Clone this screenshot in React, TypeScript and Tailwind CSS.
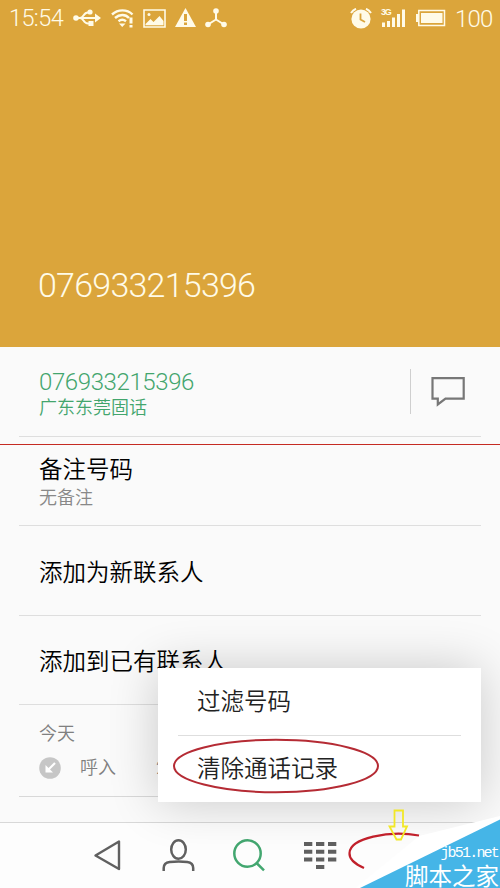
import type { ReactNode } from "react";

const PHONE = "076933215396";

export default function App() {
  return (
    <div className="relative flex h-[888px] w-[500px] flex-col overflow-hidden bg-[#fafafa] font-['Roboto','Noto_Sans_CJK_SC',sans-serif] font-[350]">
      <header className="flex h-[347px] shrink-0 flex-col justify-between bg-[#dba53b] text-[#fffbe8]">
        <StatusBar />
        <h1 className="mb-[42px] ml-[38px] text-[34px] leading-10 font-light tracking-[-0.76px]">{PHONE}</h1>
      </header>

      <main className="flex h-[475px] shrink-0 flex-col px-[19px]">
        <section className="flex h-[90px] items-center border-b border-[#dedede] pl-5">
          <div className="flex-1 text-[#43a56d]">
            <div className="mt-[7px] text-[24px] leading-[26px] font-light tracking-[-0.4px]">{PHONE}</div>
            <div className="text-[18px] leading-[26px]">广东东莞固话</div>
          </div>
          <div className="flex h-[45px] w-[71px] items-center border-l border-[#cfcfcf] pl-[20px]">
            <BubbleIcon />
          </div>
        </section>

        <section className="flex h-[89px] flex-col justify-center border-b border-[#dedede] pt-[3px] pl-5">
          <div className="text-[23.5px] leading-[30px] text-black">备注号码</div>
          <div className="text-[18px] leading-[25px] text-[#888]">无备注</div>
        </section>

        <Row>添加为新联系人</Row>
        <Row>添加到已有联系人</Row>

        <section className="flex h-[92px] flex-col border-b border-[#d8d8d8] pt-[15px] pl-5 text-[18px] text-[#808080]">
          <div className="leading-7">今天</div>
          <div className="mt-[6px] flex items-center leading-7">
            <IncomingIcon />
            <span className="ml-[19px]">呼入</span>
            <span className="ml-[40px]">22:15</span>
          </div>
        </section>
      </main>

      <NavBar />

      <Menu />

      <Marks />

      <div className="absolute right-0 bottom-0 flex flex-col items-end text-white">
        <div className="pr-[2px] font-['Liberation_Mono',monospace] text-[15px] leading-4 font-normal tracking-[-1.8px]">jb51.net</div>
        <div className="pr-[1px] font-['Noto_Sans_CJK_SC',sans-serif] text-[23.5px] leading-[26px] font-normal">脚本之家</div>
      </div>
    </div>
  );
}

function Row({ children }: { children: ReactNode }) {
  return (
    <section className="flex h-[89.5px] items-center border-b border-[#dedede] pt-[6px] pl-5 text-[23.5px] text-black">
      {children}
    </section>
  );
}

function StatusBar() {
  return (
    <div className="flex h-9 items-center pr-[9px] pl-[9px] text-[24px] font-light tracking-[-0.6px]">
      <span className="mt-[2px] text-[23.5px]">15:54</span>
      <svg className="ml-[10px]" width="28" height="20" viewBox="0 0 28 20" fill="none" stroke="currentColor" strokeWidth="2">
        <path d="M2 10h22M7 10c4 0 3-5.500 8-5.500h2M7 10c4 0 3 5.500 8 5.500h2" />
        <path d="M22 5.500l6 4.500-6 4.500z" fill="currentColor" stroke="none" />
        <circle cx="3" cy="10" r="2.8" fill="currentColor" stroke="none" />
        <circle cx="17" cy="4" r="2.6" fill="currentColor" stroke="none" />
        <path d="M15.500 13h5v5h-5z" fill="currentColor" stroke="none" />
      </svg>
      <svg className="ml-[10px]" width="23" height="20" viewBox="0 0 23 20" fill="none" stroke="currentColor" strokeWidth="2.4">
        <path d="M1 6.5c6-5.5 15-5.5 20.5 0M4 10c4.5-4 10.500-4 14 0M7.500 13.300c2.500-2 5-2 7.500 0" />
        <path d="M8 15.500h6.500L11.200 19zM18.500 9.500h3v6h-3zM18.500 17h3v2.500h-3z" fill="currentColor" stroke="none" />
      </svg>
      <svg className="ml-[9px]" width="23" height="19" viewBox="0 0 23 19" fill="none" stroke="currentColor" strokeWidth="1.6">
        <path d="M1 1h21v17H1z" />
        <path d="M2.500 15l5-5 3 3 6-6 4 5v4.200h-18z" fill="currentColor" stroke="none" />
        <circle cx="6" cy="5.500" r="1.500" fill="currentColor" stroke="none" />
      </svg>
      <svg className="ml-[9px]" width="21" height="20" viewBox="0 0 21 20">
        <path d="M10.500 0L21 19H0z" fill="currentColor" />
        <path d="M9 6h3v7H9zM9 14.500h3v2.500H9z" fill="#dba53b" />
      </svg>
      <svg className="ml-[9px]" width="22" height="20" viewBox="0 0 22 20" fill="currentColor">
        <path d="M11 3v8.500M11 11.500L3 16.500M11 11.500l8 5" stroke="currentColor" strokeWidth="2" />
        <circle cx="11" cy="3" r="2.800" />
        <circle cx="3" cy="16.500" r="2.800" />
        <circle cx="19" cy="16.500" r="2.800" />
      </svg>
      <div className="flex-1" />
      <svg width="22" height="21" viewBox="0 0 22 21" fill="none">
        <circle cx="11" cy="11" r="9.600" fill="currentColor" />
        <path d="M1 5Q3 2 6 .8M21 5Q19 2 16 .8" stroke="currentColor" strokeWidth="2" />
        <path d="M10.500 5.500v6l4.500 2.500" stroke="#dba53b" strokeWidth="1.800" />
      </svg>
      <div className="relative ml-[9px] h-[20px] w-[25px]">
        <span className="absolute -top-[2px] left-0 font-['Liberation_Sans',sans-serif] text-[9px] leading-[12px] font-bold tracking-[-1.200px]">3G</span>
        <svg width="25" height="20" viewBox="0 0 25 20" fill="currentColor">
          <path d="M1 14.500h3V19H1zM6 13h3v6H6zM11 9.500h3V19h-3zM16 6h3v13h-3zM21 1.500h3V19h-3z" />
        </svg>
      </div>
      <svg className="ml-[10px]" width="30" height="18" viewBox="0 0 30 18" fill="currentColor">
        <path d="M0 5h2.500v8H0zM5 4h21.500v10H5z" />
        <path d="M2.800 1.500h25.700v15H2.800z" fill="none" stroke="currentColor" strokeWidth="1.500" />
      </svg>
      <span className="mt-[1px] ml-[9px] w-[36px] tracking-[-0.8px]">100</span>
    </div>
  );
}

function BubbleIcon() {
  return (
    <svg width="34" height="32" viewBox="0 0 34 32" fill="none" stroke="#777" strokeWidth="2.200">
      <path d="M1.500 2.100h31.200v20.600H14.500l-7.700 5.800v-5.800H1.500z" />
    </svg>
  );
}

function IncomingIcon() {
  return (
    <svg width="22" height="22" viewBox="0 0 22 22">
      <circle cx="11" cy="11" r="10.800" fill="#c6c6c6" />
      <path d="M16 6l-7 7" stroke="#fff" strokeWidth="2.200" />
      <path d="M6.500 8v7.500H14z" fill="#fff" />
    </svg>
  );
}

function NavBar() {
  return (
    <nav className="flex h-[66px] shrink-0 items-center border-t border-[#d8d8d8] bg-[#fdfdfd] pl-[93px] text-[#606060]">
      <svg className="-mt-[2px]" width="29" height="34" viewBox="0 0 29 34" fill="none" stroke="currentColor" strokeWidth="2.400" strokeLinejoin="round">
        <path d="M26 3.500v27.500L2.500 17.500z" />
      </svg>
      <svg className="-mt-[2px] ml-[40px]" width="34" height="34" viewBox="0 0 34 34" fill="none" stroke="currentColor" strokeWidth="2.500">
        <ellipse cx="16.500" cy="11.500" rx="7.300" ry="9.300" />
        <path d="M1.700 33v-3c0-3 2-5.500 6-6 6-.8 12-.8 17.500 0 4 .5 6 3 6 6v3" />
      </svg>
      <svg className="-mt-[2px] ml-[36px] text-[#43a770]" width="34" height="34" viewBox="0 0 34 34" fill="none" stroke="currentColor" strokeWidth="2.500">
        <circle cx="15.500" cy="15.500" r="13.200" />
        <path d="M24.500 25l7.500 7.300" />
      </svg>
      <svg className="-mt-[2px] ml-[38px]" width="33" height="30" viewBox="0 0 33 30" fill="currentColor">
        <path d="M0 2h8.300v4H0zM12 2h8.300v4H12zM24 2h8.300v4H24zM0 9.700h8.300v4H0zM12 9.700h8.300v4H12zM24 9.700h8.300v4H24zM0 17.400h8.300v4H0zM12 17.400h8.300v4H12zM24 17.400h8.300v4H24zM12 25h8.300v4H12z" />
      </svg>
    </nav>
  );
}

function Menu() {
  return (
    <div className="absolute top-[668px] left-[158px] flex h-[134px] w-[323px] flex-col bg-white px-5 text-[23.5px] text-[#222] shadow-[0_0_50px_rgba(0,0,0,0.2)]">
      <div className="flex h-[68px] items-center border-b border-[#dedede] pt-[2px] pl-[19px]">过滤号码</div>
      <div className="flex h-[66px] items-center pt-[2px] pl-[19px]">清除通话记录</div>
    </div>
  );
}

// hand-drawn annotations and the corner badge, laid over the screen
function Marks() {
  return (
    <svg className="absolute inset-0" width="500" height="888" viewBox="0 0 500 888" fill="none">
      <path d="M0 444.500h500" stroke="#c52b22" strokeWidth="1.200" />
      <ellipse cx="276" cy="766" rx="102" ry="26.200" stroke="#b52b34" strokeWidth="2" />
      <path d="M500 816L419 836L355 888H500z" fill="#fff" />
      <path d="M419 835.500C389 830 350 838 349.500 853C349 859 355 864 364 868" stroke="#c1202b" strokeWidth="2.200" />
      <path d="M500 819.500V888H360z" fill="#45b5e7" />
      <path d="M394.500 810.500h8.500v16h4l-6 13h-4.500l-7-13h5z" stroke="#f2e827" strokeWidth="1.800" />
    </svg>
  );
}
